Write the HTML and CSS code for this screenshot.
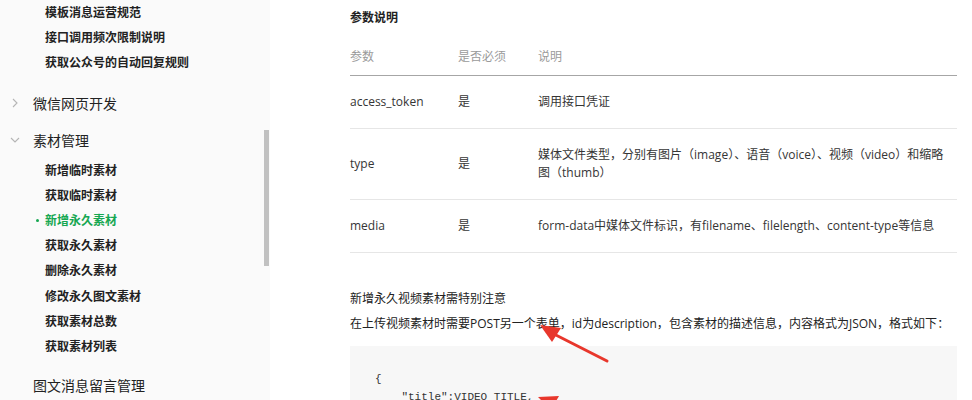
FILE: index.html
```html
<!DOCTYPE html>
<html lang="zh-CN">
<head>
<meta charset="utf-8">
<title>新增永久素材</title>
<link rel="stylesheet" href="styles.css">
</head>
<body>
<div class="page">
  <aside class="sidebar">
    <div class="group">
      <ul class="sublist">
        <li>模板消息运营规范</li>
        <li>接口调用频次限制说明</li>
        <li>获取公众号的自动回复规则</li>
      </ul>
    </div>
    <div class="group">
      <div class="group-title">
        <svg class="chev" width="10" height="10" viewBox="0 0 10 10"><polyline points="3,1 7,5 3,9" fill="none" stroke="#b5b5b5" stroke-width="1.1"/></svg>
        <span>微信网页开发</span>
      </div>
    </div>
    <div class="group open">
      <div class="group-title">
        <svg class="chev" width="10" height="10" viewBox="0 0 10 10"><polyline points="1,3 5,7 9,3" fill="none" stroke="#b5b5b5" stroke-width="1.1"/></svg>
        <span>素材管理</span>
      </div>
      <ul class="sublist">
        <li>新增临时素材</li>
        <li>获取临时素材</li>
        <li class="active">新增永久素材</li>
        <li>获取永久素材</li>
        <li>删除永久素材</li>
        <li>修改永久图文素材</li>
        <li>获取素材总数</li>
        <li>获取素材列表</li>
      </ul>
    </div>
    <div class="group">
      <div class="group-title">
        <span class="chev-space"></span>
        <span>图文消息留言管理</span>
      </div>
    </div>
    <div class="scroll-thumb"></div>
  </aside>

  <main class="content">
    <h4 class="section-title">参数说明</h4>
    <table class="params">
      <thead>
        <tr><th class="c-name">参数</th><th class="c-req">是否必须</th><th class="c-desc">说明</th></tr>
      </thead>
      <tbody>
        <tr><td>access_token</td><td>是</td><td>调用接口凭证</td></tr>
        <tr><td>type</td><td>是</td><td>媒体文件类型<span class="pn">，</span>分别有图片<span class="pn">（</span>image<span class="pn">）、</span>语音<span class="pn">（</span>voice<span class="pn">）、</span>视频<span class="pn">（</span>video<span class="pn">）</span>和缩略图<span class="pn">（</span>thumb<span class="pn">）</span></td></tr>
        <tr><td>media</td><td>是</td><td>form-data中媒体文件标识<span class="pn">，</span>有filename、filelength、content-type等信息</td></tr>
      </tbody>
    </table>
    <p class="note-title">新增永久视频素材需特别注意</p>
    <p class="note">在上传视频素材时需要POST另一个表单<span class="pn">，</span>id为description<span class="pn">，</span>包含素材的描述信息<span class="pn">，</span>内容格式为JSON<span class="pn">，</span>格式如下<span class="pn">：</span></p>
    <pre class="code">{
    "title":VIDEO_TITLE,
    "introduction":INTRODUCTION
}</pre>
    <svg class="arrows" width="120" height="90" viewBox="0 0 120 90">
      <line x1="81" y1="43" x2="20" y2="12" stroke="#e8372c" stroke-width="3" stroke-linecap="round"/>
      <polygon points="14,7 35,10 26,24" fill="#e8372c"/>
      <line x1="50" y1="95" x2="20" y2="82" stroke="#e8372c" stroke-width="3" stroke-linecap="round"/>
      <polygon points="12,79 33,78 25,92" fill="#e8372c"/>
    </svg>
  </main>
</div>
</body>
</html>
```

FILE: styles.css
```css
* { box-sizing: border-box; }
html, body { margin: 0; padding: 0; background: #fff; }
body {
  font-family: "Open Sans", "Noto Sans CJK SC", sans-serif;
  color: #353535;
  width: 972px;
  height: 400px;
  overflow: hidden;
}
.page {
  display: flex;
  align-items: flex-start;
  height: 400px;
}
.sidebar {
  position: relative;
  width: 270px;
  flex: none;
  height: 400px;
  background: #fafafa;
}
.scroll-thumb {
  position: absolute;
  left: 264px;
  top: 130px;
  width: 5px;
  height: 136px;
  background: #c1c1c1;
}
.group { margin-bottom: 0; }
.sublist {
  list-style: none;
  margin: 0 0 8px 0;
  padding: 0 0 0 45px;
}
.group.open .sublist { margin-bottom: 6px; }
.sublist li {
  position: relative;
  height: 25.2px;
  line-height: 25px;
  font-size: 12px;
  font-weight: 600;
  color: #222;
  white-space: nowrap;
}
.sublist li.active { color: #15a751; }
.sublist li.active::before {
  content: "";
  position: absolute;
  left: -9px;
  top: 11px;
  width: 3px;
  height: 3px;
  border-radius: 50%;
  background: #15a751;
}
.group-title {
  display: flex;
  align-items: center;
  height: 37px;
  padding-left: 10px;
  padding-top: 2px;
  font-size: 14px;
  color: #222;
}
.chev, .chev-space {
  width: 10px;
  height: 10px;
  margin-right: 13px;
  flex: none;
}
.content {
  position: relative;
  flex: 1;
  min-width: 0;
  padding: 0 15px 0 80px;
}
.pn { font-family: "Noto Sans CJK TC", sans-serif; line-height: 0; }
.section-title {
  margin: 0;
  padding-top: 9px;
  font-size: 12px;
  line-height: 18px;
  font-weight: 700;
  color: #222;
}
.params {
  margin-top: 12px;
  width: 100%;
  border-collapse: collapse;
  font-size: 12px;
  line-height: 18px;
}
.params th {
  text-align: left;
  font-weight: normal;
  color: #9a9a9a;
  padding: 9px 0;
  border-bottom: 1px solid #a6a6a6;
}
.params td {
  padding: 17px 0;
  border-bottom: 1px solid #e6e6e6;
  vertical-align: middle;
}
.c-name { width: 108px; }
.c-req { width: 80px; }
.params td:last-child { padding-right: 2px; }
.note-title {
  margin: 37px 0 0 0;
  font-size: 12px;
  line-height: 18px;
  color: #222;
}
.note {
  margin: 7px 0 0 0;
  font-size: 12px;
  line-height: 18px;
  color: #222;
  white-space: nowrap;
}
.code {
  margin: 13px 0 0 0;
  background: #f7f7f7;
  padding: 24px 25px;
  font-family: "Liberation Mono", monospace;
  font-size: 11px;
  line-height: 18px;
  color: #333;
}
.arrows {
  position: absolute;
  left: 256px;
  top: 318px;
  overflow: visible;
}
```
